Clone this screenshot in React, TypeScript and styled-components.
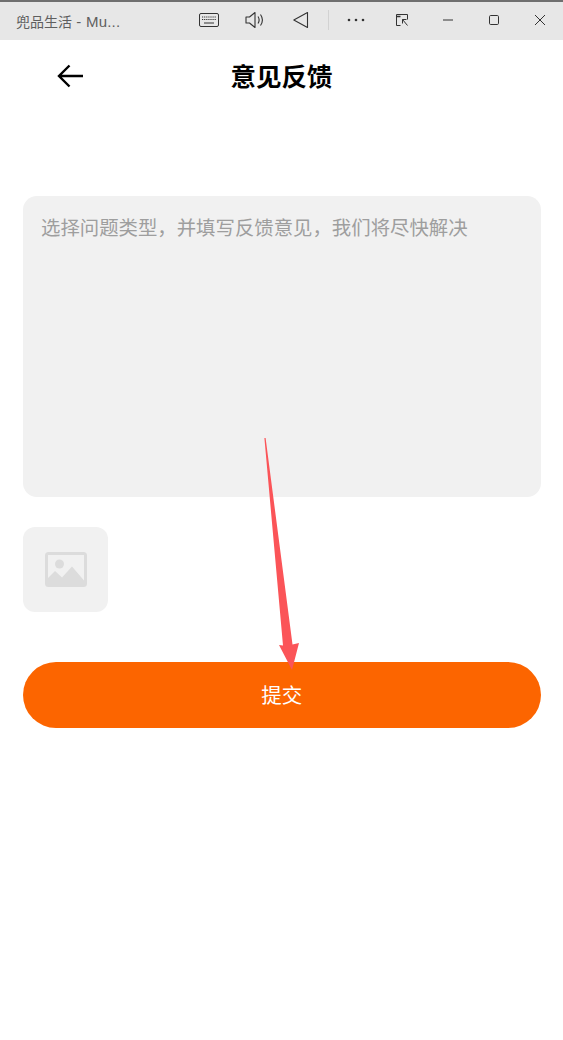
import React from "react";
import styled, { createGlobalStyle } from "styled-components";

const Global = createGlobalStyle`
  html, body { margin: 0; padding: 0; background: #fff; }
  body { font-family: "Noto Sans CJK SC", "Noto Sans", sans-serif; }
  * { box-sizing: border-box; }
`;

const Page = styled.div`
  position: relative;
  width: 563px;
  height: 1040px;
  overflow: hidden;
  background: #fff;
`;

const TitleBar = styled.div`
  height: 40px;
  display: flex;
  align-items: center;
  background: #e7e7e7;
  border-top: 2px solid #6f6f6f;
`;

const WindowTitle = styled.div`
  width: 186px;
  padding-left: 16px;
  font-size: 14px;
  line-height: 20px;
  color: #5f5f5f;
  white-space: nowrap;
`;

const TitleLatin = styled.span`
  font-family: "Liberation Sans", sans-serif;
  font-size: 15px;
  letter-spacing: 0.2px;
`;

const Tool = styled.div`
  width: 46px;
  height: 38px;
  display: flex;
  align-items: center;
  justify-content: center;
  margin-top: -2px;
  color: #333;
`;

const Divider = styled.div`
  width: 1px;
  height: 20px;
  margin: -2px 4px 0 4px;
  background: #d2d2d2;
`;

const Header = styled.div`
  height: 74px;
  display: flex;
  align-items: center;
  justify-content: center;
  position: relative;
`;

const Back = styled.div`
  position: absolute;
  left: 57px;
  top: 23px;
  width: 28px;
  height: 26px;
  color: #000;
`;

const Title = styled.h1`
  margin: -5px 0 0 0;
  font-size: 25.5px;
  line-height: 36px;
  font-weight: 700;
  color: #000;
`;

const Content = styled.main`
  padding: 82px 22px 0 22.5px;
  display: flex;
  flex-direction: column;
`;

const Field = styled.div`
  height: 301px;
  background: #f1f1f1;
  border-radius: 14px;
  padding: 16px 18.5px;
  font-size: 19.4px;
  line-height: 29px;
  color: #9e9e9e;
  white-space: nowrap;
`;

const Picture = styled.div`
  width: 85.5px;
  height: 85px;
  margin-top: 30px;
  padding-left: 1px;
  border-radius: 12px;
  background: #f1f1f1;
  display: flex;
  align-items: center;
  justify-content: center;
`;

const Submit = styled.button`
  margin-top: 50px;
  height: 66px;
  border: 0;
  border-radius: 33px;
  background: #fc6500;
  color: #fff;
  font-family: inherit;
  font-size: 20.5px;
  line-height: 30px;
  padding: 0 0 3px 0;
`;

const Annotation = styled.svg`
  position: absolute;
  left: 0;
  top: 0;
  pointer-events: none;
`;

export default function App() {
  return (
    <Page>
      <Global />
      <TitleBar>
        <WindowTitle>
          兜品生活<TitleLatin> - Mu...</TitleLatin>
        </WindowTitle>
        <Tool>
          <svg width="22" height="14" viewBox="0 0 22 14" fill="none" stroke="#333" strokeWidth="1">
            <rect x="1.5" y="0.5" width="19" height="13" rx="1.5" />
            <path d="M4 4h14M4 6.5h14" strokeDasharray="1.2 0.9" />
            <path d="M6 10h10" />
          </svg>
        </Tool>
        <Tool>
          <svg width="20" height="18" viewBox="0 0 20 18" fill="none" stroke="#333" strokeWidth="1.1">
            <path d="M1 6h3.5L10 1.5v15L4.500 12H1z" strokeLinejoin="round" />
            <path d="M13 5.500c1.300 2 1.300 5 0 7M15.500 3.500c2.300 3.300 2.300 7.700 0 11" />
          </svg>
        </Tool>
        <Tool>
          <svg width="18" height="18" viewBox="0 0 18 18" fill="none" stroke="#333" strokeWidth="1.1">
            <path d="M15.500 1.500v15L1.800 9z" strokeLinejoin="round" />
          </svg>
        </Tool>
        <Divider />
        <Tool>
          <svg width="18" height="4" viewBox="0 0 18 4" fill="#333">
            <circle cx="2" cy="2" r="1.300" />
            <circle cx="9" cy="2" r="1.300" />
            <circle cx="16" cy="2" r="1.300" />
          </svg>
        </Tool>
        <Tool>
          <svg width="14" height="14" viewBox="0 0 14 14" fill="none" stroke="#333" strokeWidth="1">
            <path d="M5.500 12.500H1.500V1.500h11v5" />
            <path d="M1.500 3.500h4" strokeWidth="1.500" />
            <path d="M7.500 6.500v4M7.500 6.500h4M7.500 6.500l5 6" />
          </svg>
        </Tool>
        <Tool>
          <svg width="12" height="2" viewBox="0 0 12 2" fill="none" stroke="#333" strokeWidth="1">
            <path d="M1 1h10" />
          </svg>
        </Tool>
        <Tool>
          <svg width="12" height="12" viewBox="0 0 12 12" fill="none" stroke="#333" strokeWidth="1">
            <rect x="1.500" y="1.500" width="9" height="9" rx="1.200" />
          </svg>
        </Tool>
        <Tool>
          <svg width="12" height="12" viewBox="0 0 12 12" fill="none" stroke="#333" strokeWidth="1">
            <path d="M1 1l10 10M11 1L1 11" />
          </svg>
        </Tool>
      </TitleBar>
      <Header>
        <Back>
          <svg width="28" height="26" viewBox="0 0 28 26" fill="none" stroke="#000" strokeWidth="2.400">
            <path d="M2 13h24M12.500 2.500L2 13l10.500 10.500" />
          </svg>
        </Back>
        <Title>意见反馈</Title>
      </Header>
      <Content>
        <Field>选择问题类型，并填写反馈意见，我们将尽快解决</Field>
        <Picture>
          <svg width="42" height="35" viewBox="0 0 42 35" fill="#dcdcdc">
            <path
              fillRule="evenodd"
              d="M3.500 0h35a3.500 3.500 0 0 1 3.500 3.500v28a3.500 3.500 0 0 1-3.500 3.500h-35A3.500 3.500 0 0 1 0 31.500v-28A3.500 3.500 0 0 1 3.500 0zM3 3v29h36V3z"
            />
            <circle cx="14.500" cy="12" r="4.500" />
            <path d="M3 26l7-7 7 6.500L27 14.500l12 14V32H3z" />
          </svg>
        </Picture>
        <Submit>提交</Submit>
      </Content>
      <Annotation width="563" height="1040" viewBox="0 0 563 1040">
        <path d="M264.400 438L283 645.500 279 645 292 670 299 643 292.500 644.500 265.600 438z" fill="#fb5458" />
      </Annotation>
    </Page>
  );
}
